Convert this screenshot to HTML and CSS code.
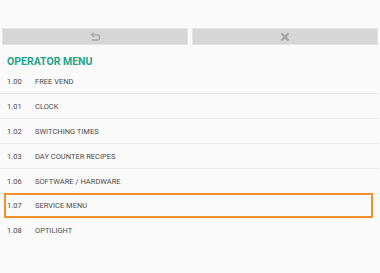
FILE: index.html
```html
<!DOCTYPE html>
<html lang="en">
<head>
  <meta charset="utf-8">
  <title>Operator menu</title>
  <link rel="stylesheet" href="styles.css">
</head>
<body>
  <div class="toolbar">
    <div class="tbButton">
      <svg width="12" height="10" viewBox="0 0 12 10">
        <path d="M5 0.8 L2.6 2.8 L5 4.8 M2.8 2.8 L8 2.8 A2.6 2.6 0 0 1 8 8 L3 8" fill="none" stroke="#a9a9a9" stroke-width="1.3"/>
      </svg>
    </div>
    <div class="tbButton">
      <svg width="10" height="10" viewBox="0 0 10 10">
        <path d="M1.5 1.5 L8.5 8.5 M8.5 1.5 L1.5 8.5" fill="none" stroke="#a3a3a3" stroke-width="2.2"/>
      </svg>
    </div>
  </div>

  <h2 class="title">OPERATOR MENU</h2>

  <div class="menu">
    <div class="row"><span class="num">1.00</span><span class="label">FREE VEND</span></div>
    <div class="row"><span class="num">1.01</span><span class="label">CLOCK</span></div>
    <div class="row"><span class="num">1.02</span><span class="label">SWITCHING TIMES</span></div>
    <div class="row"><span class="num">1.03</span><span class="label">DAY COUNTER RECIPES</span></div>
    <div class="row"><span class="num">1.06</span><span class="label">SOFTWARE / HARDWARE</span></div>
    <div class="row selected"><span class="num">1.07</span><span class="label">SERVICE MENU</span></div>
    <div class="row last"><span class="num">1.08</span><span class="label">OPTILIGHT</span></div>
  </div>
</body>
</html>
```

FILE: styles.css
```css
html {
  font-family: Roboto, "Liberation Sans", sans-serif;
}
body {
  margin: 0;
  background: #fafafa;
  color: #4a4a4a;
}
.toolbar {
  display: flex;
  gap: 4px;
  padding: 28px 2px 0 2px;
}
.tbButton {
  flex: 1;
  height: 17px;
  box-sizing: border-box;
  background: #d6d6d6;
  border: 1px solid #e4e4e4;
  display: flex;
  align-items: center;
  justify-content: center;
}
.title {
  margin: 0;
  padding: 10px 0 0 7px;
  line-height: 14px;
  font-size: 10.5px;
  font-weight: bold;
  color: #22a487;
}
.menu {
  padding-right: 2px;
}
.row {
  height: 25px;
  box-sizing: border-box;
  border-bottom: 1px solid #e9e9e9;
  display: flex;
  align-items: center;
  font-size: 7.5px;
}
.row.last {
  border-bottom: none;
}
.num {
  width: 28px;
  padding-left: 7px;
}
.selected {
  margin: -1px 5px 0 4px;
  height: 25px;
  border: 2px solid #f0902c;
}
.selected .num {
  padding-left: 1px;
}
```
